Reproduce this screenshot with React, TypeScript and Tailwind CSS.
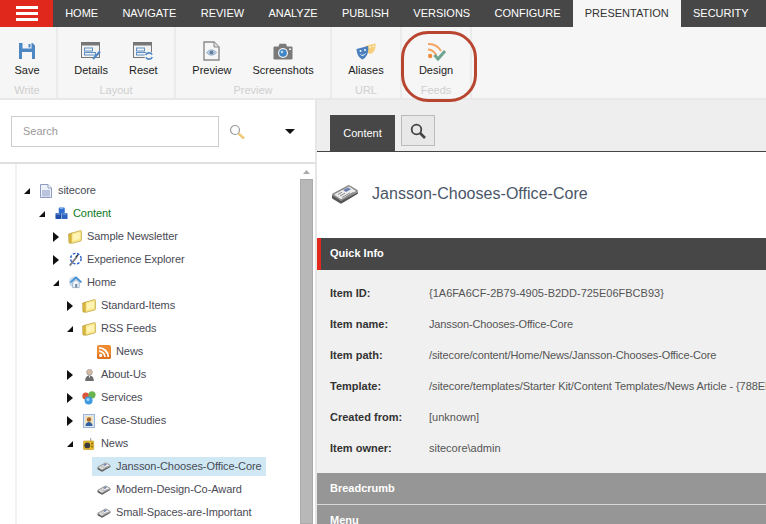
import React from "react";

const font = { fontFamily: '"Liberation Sans", Arial, sans-serif' };

function Folder() {
  return (
    <svg width="14" height="14" viewBox="0 0 14 14">
      <path d="M.7 4 L4.5 3 L4.5 12.5 L2 13.3 Q1 13.3 .9 12 Z" fill="#e6bd3e" stroke="#ad9230" strokeWidth="0.7" />
      <path d="M3.2 3.2 L12.6 .6 Q13.4 .6 13.4 1.5 L13.4 10 Q13.4 10.8 12.6 11 L4 13.3 Q3.2 13.3 3.2 12.4 Z" fill="#fbe88a" stroke="#b89d38" strokeWidth="0.7" />
      <path d="M5 4.5 L11.8 2.6 L11.8 8.8 L5 10.8 Z" fill="#fff3b5" />
    </svg>
  );
}
function DocIcon() {
  return (
    <svg width="12" height="14" viewBox="0 0 12 14">
      <path d="M.5 .5 H8 L11.5 4 V13.5 H.5 Z" fill="#eef1f8" stroke="#8d9cc0" />
      <rect x="2" y="6" width="8" height="6.5" fill="#b9c4de" />
      <path d="M8 .5 V4 H11.5" fill="#fff" stroke="#8d9cc0" />
    </svg>
  );
}
function Cubes() {
  return (
    <svg width="13" height="13" viewBox="0 0 14 14">
      <rect x="4" y="0.5" width="6.5" height="6.5" rx="1" fill="#2f6fd0" />
      <rect x="0.5" y="6.5" width="6.5" height="6.5" rx="1" fill="#1f4fa8" />
      <rect x="7.5" y="6.5" width="6" height="6.5" rx="1" fill="#2d62c0" />
      <path d="M5 1.5 h4 M1.5 7.5 h4 M8.5 7.5 h4" stroke="#8fb8ef" />
    </svg>
  );
}
function Explorer() {
  return (
    <svg width="14" height="15" viewBox="0 0 16 16">
      <circle cx="9" cy="7" r="6" fill="none" stroke="#2b5fc9" strokeWidth="1.6" strokeDasharray="3 1.8" />
      <path d="M2 15 L10 5" stroke="#7d7d86" strokeWidth="2" />
      <path d="M9 5 L11.5 3" stroke="#333" strokeWidth="1.6" />
    </svg>
  );
}
function HomeIcon() {
  return (
    <svg width="13" height="13" viewBox="0 0 14 14">
      <circle cx="6" cy="6.5" r="6" fill="#c3d8ea" />
      <path d="M1.5 7 L7.5 1.5 L13.5 7" fill="none" stroke="#3f8ed3" strokeWidth="1.8" />
      <path d="M4 7 L7.5 4 L11 7 V12.5 H4 Z" fill="#f3f7fb" stroke="#8ba5bd" strokeWidth="0.8" />
      <rect x="6.5" y="8.5" width="2.5" height="4" fill="#7d94ab" />
    </svg>
  );
}
function RssBox() {
  return (
    <svg width="14" height="14" viewBox="0 0 14 14">
      <rect width="14" height="14" rx="2" fill="#ee8a32" />
      <rect y="9" width="14" height="5" rx="2" fill="#dd7222" />
      <circle cx="3.7" cy="10.4" r="1.6" fill="#fff" />
      <path d="M2 6.2 A6 6 0 0 1 8 12 M2 2.8 A9.3 9.3 0 0 1 11.3 12" fill="none" stroke="#fff" strokeWidth="1.8" />
    </svg>
  );
}
function Person() {
  return (
    <svg width="11" height="14" viewBox="0 0 14 16">
      <circle cx="7" cy="4.5" r="3.6" fill="#d7bba0" stroke="#9a9a9a" strokeWidth="1" />
      <path d="M1.5 15.5 C1.5 10.5 4 8.5 7 8.5 C10 8.5 12.5 10.5 12.5 15.5 Z" fill="#6d6d6d" />
      <path d="M6 9 L7 12 L8 9 Z" fill="#eee" />
    </svg>
  );
}
function Services() {
  return (
    <svg width="14" height="14" viewBox="0 0 14 14">
      <circle cx="3.8" cy="5" r="3.5" fill="#d9573c" />
      <circle cx="10" cy="3.8" r="3.6" fill="#69b34c" />
      <circle cx="6.6" cy="9.5" r="4" fill="#3f9be0" />
      <circle cx="6" cy="8.6" r="1.5" fill="#a5d6f7" />
    </svg>
  );
}
function CasePhoto() {
  return (
    <svg width="12" height="14" viewBox="0 0 12 14">
      <rect x=".5" y=".5" width="11" height="13" fill="#dbe6f6" stroke="#9db4d8" />
      <rect x="2" y="2" width="8" height="10" fill="#f2e2b8" />
      <circle cx="6" cy="5.5" r="2.2" fill="#a8642a" />
      <path d="M2.5 12 C2.5 9 4.5 8 6 8 C7.5 8 9.5 9 9.5 12 Z" fill="#2f5fa5" />
    </svg>
  );
}
function Radio() {
  return (
    <svg width="12" height="14" viewBox="0 0 14 15">
      <path d="M9 5 L9 .5" stroke="#888" />
      <rect x=".5" y="4" width="12" height="10" rx="1" fill="#e8bd2c" stroke="#b8901c" strokeWidth="0.7" />
      <circle cx="5" cy="9.2" r="3.4" fill="#3c3c3c" />
      <rect x="9.5" y="6" width="2" height="2" fill="#8a6a12" />
      <rect x="9.5" y="9.5" width="2" height="2" fill="#8a6a12" />
    </svg>
  );
}
function Paper({ size = 14 }: { size?: number }) {
  return (
    <svg width={size} height={(size * 20) / 28} viewBox="0 0 28 20">
      <path d="M1 11 Q1 9.5 2.5 9 L17 1.2 Q18 .8 19 1.4 L26.5 6 Q27.5 7 26.5 8 L10 18 Z" fill="#8d8d8d" />
      <path d="M1 11 L1 13.5 Q1 14.5 2 15 L9 19.2 Q10 19.7 11 19.2 L26.5 10 Q27.5 9.3 27 8 L10 17 Z" fill="#555" />
      <path d="M3 10.5 L18 2.6 L25 7 L10 15.3 Z" fill="#ececec" />
      <path d="M12 6 L17 3.5 L20 5.2 L15 8 Z" fill="#6c7fae" />
      <path d="M7 10.5 L11 8.2 M9 12 L14 9.1 M11 13.5 L19 8.9 M15 13 L22 8.5" stroke="#888" strokeWidth="1" />
    </svg>
  );
}

type Row = { label: string; level: number; arrow?: "open" | "closed"; icon: React.ReactNode; green?: boolean; selected?: boolean };

const rows: Row[] = [
  { label: "sitecore", level: 0, arrow: "open", icon: <DocIcon /> },
  { label: "Content", level: 1, arrow: "open", icon: <Cubes />, green: true },
  { label: "Sample Newsletter", level: 2, arrow: "closed", icon: <Folder /> },
  { label: "Experience Explorer", level: 2, arrow: "closed", icon: <Explorer /> },
  { label: "Home", level: 2, arrow: "open", icon: <HomeIcon /> },
  { label: "Standard-Items", level: 3, arrow: "closed", icon: <Folder /> },
  { label: "RSS Feeds", level: 3, arrow: "open", icon: <Folder /> },
  { label: "News", level: 4, icon: <RssBox /> },
  { label: "About-Us", level: 3, arrow: "closed", icon: <Person /> },
  { label: "Services", level: 3, arrow: "closed", icon: <Services /> },
  { label: "Case-Studies", level: 3, arrow: "closed", icon: <CasePhoto /> },
  { label: "News", level: 3, arrow: "open", icon: <Radio /> },
  { label: "Jansson-Chooses-Office-Core", level: 4, icon: <Paper />, selected: true },
  { label: "Modern-Design-Co-Award", level: 4, icon: <Paper /> },
  { label: "Small-Spaces-are-Important", level: 4, icon: <Paper /> },
];

const indentClass = ["pl-[5px]", "pl-[20px]", "pl-[34px]", "pl-[48px]", "pl-[63px]"];

function Arrow({ type }: { type?: "open" | "closed" }) {
  return (
    <span className="w-[10px] h-[10px] mr-[7px] flex items-center justify-center shrink-0">
      {type === "open" && (
        <svg width="6" height="6" viewBox="0 0 6 6"><path d="M6 0 V6 H0 Z" fill="#111" /></svg>
      )}
      {type === "closed" && (
        <svg width="6" height="10" viewBox="0 0 6 10"><path d="M0 0 L6 5 L0 10 Z" fill="#111" /></svg>
      )}
    </span>
  );
}

function TreeRow({ r }: { r: Row }) {
  return (
    <div className={`h-[23px] flex items-center text-[11px] tracking-[-0.08px] ${indentClass[r.level]}`}>
      <Arrow type={r.arrow} />
      <div className={`flex items-center h-[19px] pr-[4px] ${r.selected ? "bg-[#cfe8f4] -ml-[5px] pl-[5px]" : ""}`}>
        <span className="w-[14px] flex items-center justify-center shrink-0 mr-[5px]">{r.icon}</span>
        <span className={r.green ? "text-[#0b7a23]" : "text-[#4a4a55]"}>{r.label}</span>
      </div>
    </div>
  );
}

function RibbonItem({ icon, label, className = "" }: { icon: React.ReactNode; label: string; className?: string }) {
  return (
    <div className={`flex flex-col items-center ${className}`}>
      <div className="h-[24px] flex items-center justify-center">{icon}</div>
      <div className="mt-[1px] text-[11px] leading-[13px] text-[#222] whitespace-nowrap">{label}</div>
    </div>
  );
}

function RibbonGroup({ title, children, className = "" }: { title: string; children: React.ReactNode; className?: string }) {
  return (
    <div className={`h-full flex flex-col border-r-2 border-[#ebebeb] ${className}`}>
      <div className="flex justify-center pt-[12px] h-[57px] gap-[21px]">{children}</div>
      <div className="text-center text-[11px] leading-[13px] text-[#cfcfcf]">{title}</div>
    </div>
  );
}

function SaveIcon() {
  return (
    <svg width="18" height="18" viewBox="0 0 18 18">
      <path d="M1 1 H14.5 L17 3.5 V17 H1 Z" fill="#4e88c4" />
      <rect x="4.5" y="1" width="9" height="5.5" fill="#f6f6f6" />
      <rect x="10.5" y="2" width="2" height="3.5" fill="#4e88c4" />
      <rect x="4" y="10" width="10" height="7" fill="#f6f6f6" />
    </svg>
  );
}
function WindowIcon({ badge }: { badge: "pen" | "sync" }) {
  return (
    <svg width="21" height="19" viewBox="0 0 21 19">
      <rect x=".5" y=".5" width="18" height="15" fill="#f3f3f3" stroke="#777" />
      <rect x=".5" y=".5" width="18" height="3" fill="#777" />
      <rect x="3.5" y="6" width="8" height="3" fill="none" stroke="#5d8fc4" />
      <rect x="3.5" y="10.5" width="11" height="2.5" fill="none" stroke="#5d8fc4" />
      {badge === "pen" ? (
        <path d="M12 17 L19 9.5" stroke="#4e88c4" strokeWidth="2.2" />
      ) : (
        <g>
          <circle cx="16" cy="14" r="4.5" fill="#f6f6f6" />
          <path d="M12.8 13 A3.4 3.4 0 0 1 19 12.6 M19.2 15 A3.4 3.4 0 0 1 13 15.4" fill="none" stroke="#4e88c4" strokeWidth="1.7" />
        </g>
      )}
    </svg>
  );
}
function PreviewIcon() {
  return (
    <svg width="17" height="20" viewBox="0 0 17 20">
      <path d="M1 1 H11 L16 6 V19 H1 Z" fill="#f6f6f6" stroke="#8a8a8a" strokeWidth="1.4" />
      <path d="M11 1 V6 H16" fill="#ddd" stroke="#8a8a8a" />
      <path d="M3.5 11.5 C6 8 11 8 13.5 11.5 C11 15 6 15 3.5 11.5 Z" fill="#b6cfe6" stroke="#7a9cc0" strokeWidth="0.7" />
      <circle cx="8.5" cy="11.5" r="2" fill="#6f7f96" />
    </svg>
  );
}
function CameraIcon() {
  return (
    <svg width="20" height="17" viewBox="0 0 20 17">
      <path d="M1.5 3.5 H5.5 L6.5 .8 H13 L14 3.5 H18.5 Q19.5 3.5 19.5 4.5 V15.5 Q19.5 16.5 18.5 16.5 H1.5 Q.5 16.5 .5 15.5 V4.5 Q.5 3.5 1.5 3.5 Z" fill="#7a7a7a" />
      <circle cx="10" cy="10" r="5" fill="#f0f0f0" />
      <circle cx="10" cy="10" r="3.8" fill="#3e84c6" />
      <circle cx="9" cy="9" r="1.3" fill="#bcdcf5" />
      <rect x="16" y="5.5" width="2" height="1.5" fill="#eee" />
    </svg>
  );
}
function MasksIcon() {
  return (
    <svg width="20" height="17" viewBox="0 0 20 17">
      <path d="M9 3 L19.5 .5 C20 5 18.5 10 14 11 C11 10 9.5 7 9 3 Z" fill="#f5cf7c" />
      <path d="M.5 6 L12 3 C13 8 11.5 14 6.5 16.5 C2.5 15 .8 10.5 .5 6 Z" fill="#4a7fc0" />
      <circle cx="4.5" cy="8" r="1" fill="#f6f6f6" />
      <circle cx="9" cy="7" r="1" fill="#f6f6f6" />
      <path d="M4.5 11.5 C6 13 8 12.5 9.5 10.5" fill="none" stroke="#f6f6f6" />
      <circle cx="14" cy="4" r=".8" fill="#fff" />
      <circle cx="17.5" cy="3.3" r=".8" fill="#fff" />
    </svg>
  );
}
function DesignIcon() {
  return (
    <svg width="19" height="19" viewBox="0 0 19 19">
      <circle cx="3.2" cy="14" r="2.2" fill="#f08a3c" />
      <path d="M1 7.5 A8.5 8.5 0 0 1 9.5 15 M1 2 A14 14 0 0 1 14 9" fill="none" stroke="#f4a460" strokeWidth="2" />
      <path d="M7.5 13 L11 17 L18 9" fill="none" stroke="#6fa58f" strokeWidth="3" />
    </svg>
  );
}
function Loupe({ className = "" }: { className?: string }) {
  return (
    <svg className={className} width="16" height="16" viewBox="0 0 16 16">
      <circle cx="6" cy="6" r="4.5" fill="none" stroke="#9a9a9a" strokeWidth="1.2" />
      <path d="M9.5 9.5 L15 14.5" stroke="#f0c878" strokeWidth="2.4" />
    </svg>
  );
}

const info = [
  ["Item ID:", "{1A6FA6CF-2B79-4905-B2DD-725E06FBCB93}", ""],
  ["Item name:", "Jansson-Chooses-Office-Core", "tracking-[-0.14px]"],
  ["Item path:", "/sitecore/content/Home/News/Jansson-Chooses-Office-Core", "tracking-[-0.13px]"],
  ["Template:", "/sitecore/templates/Starter Kit/Content Templates/News Article - {788EF", "tracking-[-0.08px]"],
  ["Created from:", "[unknown]", ""],
  ["Item owner:", "sitecore\\admin", ""],
];

const tabs = ["HOME", "NAVIGATE", "REVIEW", "ANALYZE", "PUBLISH", "VERSIONS", "CONFIGURE", "PRESENTATION", "SECURITY"];

export default function App() {
  return (
    <div className="relative w-[766px] h-[524px] overflow-hidden bg-white flex flex-col" style={font}>
      <div className="h-[27px] bg-[#474747] flex shrink-0">
        <div className="w-[53px] bg-[#e0281c] flex flex-col items-center justify-center gap-[3px]">
          <span className="block w-[22px] h-[3px] bg-white" />
          <span className="block w-[22px] h-[3px] bg-white" />
          <span className="block w-[22px] h-[3px] bg-white" />
        </div>
        <div className="flex whitespace-nowrap">
          {tabs.map((t) => (
            <div
              key={t}
              className={`h-[27px] px-[12.15px] text-[11px] leading-[27px] ${t === "PRESENTATION" ? "bg-[#f6f6f6] text-[#333]" : "text-white"}`}
            >
              {t}
            </div>
          ))}
        </div>
      </div>

      <div className="h-[73px] bg-[#f6f6f6] border-b-2 border-[#e8e8e8] flex shrink-0">
        <RibbonGroup title="Write" className="w-[58px] pr-[2px]">
          <RibbonItem icon={<SaveIcon />} label="Save" />
        </RibbonGroup>
        <RibbonGroup title="Layout" className="w-[118px]">
          <RibbonItem icon={<WindowIcon badge="pen" />} label="Details" />
          <RibbonItem icon={<WindowIcon badge="sync" />} label="Reset" />
        </RibbonGroup>
        <RibbonGroup title="Preview" className="w-[156px]">
          <RibbonItem icon={<PreviewIcon />} label="Preview" />
          <RibbonItem icon={<CameraIcon />} label="Screenshots" />
        </RibbonGroup>
        <RibbonGroup title="URL" className="w-[70px]">
          <RibbonItem icon={<MasksIcon />} label="Aliases" />
        </RibbonGroup>
        <RibbonGroup title="Feeds" className="w-[70px]">
          <RibbonItem icon={<DesignIcon />} label="Design" />
        </RibbonGroup>
      </div>

      <div className="flex flex-1 min-h-0">
        <div className="w-[317px] shrink-0 flex flex-col border-r-2 border-[#e6e6e6]">
          <div className="h-[64px] shrink-0 border-b-2 border-[#e0e0e0] flex items-start pt-[16px] pl-[11px]">
            <div className="w-[208px] h-[31px] border border-[#ccc] flex items-center pl-[11px] text-[11px] text-[#999]">Search</div>
            <Loupe className="mt-[8px] ml-[10px]" />
            <svg className="mt-[13px] ml-[40px]" width="10" height="5" viewBox="0 0 10 5"><path d="M0 0 H10 L5 5 Z" fill="#111" /></svg>
          </div>
          <div className="flex flex-1 min-h-0 ml-[15px] border-l-2 border-[#f2f2f2]">
            <div className="flex-1 pt-[15px] min-w-0">
              {rows.map((r, i) => (
                <TreeRow key={i} r={r} />
              ))}
            </div>
            <div className="w-[13px] mr-[2px] shrink-0 flex flex-col items-center">
              <svg className="mt-[6px] mb-[5px]" width="7" height="4" viewBox="0 0 7 4"><path d="M3.5 0 L7 4 H0 Z" fill="#aaa" /></svg>
              <div className="w-[13px] flex-1 bg-[#b8b8b8] border border-[#aaa]" />
            </div>
          </div>
        </div>

        <div className="flex-1 min-w-0 flex flex-col overflow-hidden">
          <div className="h-[52px] shrink-0 bg-[#eeeeee] border-b border-[#444] flex items-start pl-[13px] pt-[15px]">
            <div className="w-[65px] h-[36px] bg-[#474747] text-white text-[11px] flex items-center justify-center">Content</div>
            <div className="ml-[6px] w-[34px] h-[31px] bg-[#e8e8e8] border border-[#bbb] flex items-center justify-center">
              <svg width="16" height="16" viewBox="0 0 16 16">
                <circle cx="6.5" cy="6.5" r="4.8" fill="none" stroke="#444" strokeWidth="1.8" />
                <path d="M10 10 L15 15" stroke="#444" strokeWidth="2.6" />
              </svg>
            </div>
          </div>
          <div className="h-[86px] shrink-0 flex items-center pl-[14px] pb-[2px]">
            <Paper size={28} />
            <div className="ml-[13px] text-[16px] tracking-[0.03px] text-[#4a5668] whitespace-nowrap">Jansson-Chooses-Office-Core</div>
          </div>
          <div className="h-[32px] shrink-0 bg-[#474747] border-l-4 border-[#e0281c] pl-[9px] pb-[2px] flex items-center text-[11px] font-bold text-white">
            Quick Info
          </div>
          <div className="h-[203px] shrink-0 bg-[#f0f0f0] pt-[8px]">
            {info.map(([k, v, c]) => (
              <div key={k} className="h-[31px] flex items-center pl-[13px] whitespace-nowrap">
                <div className="w-[99px] shrink-0 text-[11px] font-bold text-[#333]">{k}</div>
                <div className={`text-[11px] text-[#555] ${c}`}>{v}</div>
              </div>
            ))}
          </div>
          <div className="h-[31px] shrink-0 bg-[#969696] pl-[13px] flex items-center text-[11px] font-bold text-white">Breadcrumb</div>
          <div className="h-[1px] shrink-0 bg-[#d8d8d8]" />
          <div className="h-[31px] shrink-0 bg-[#969696] pl-[13px] flex items-center text-[11px] font-bold text-white">Menu</div>
        </div>
      </div>

      <div className="absolute left-[401px] top-[31px] w-[76px] h-[71px] rounded-[27px] border-[3px] border-[#b8452f]" />
    </div>
  );
}
